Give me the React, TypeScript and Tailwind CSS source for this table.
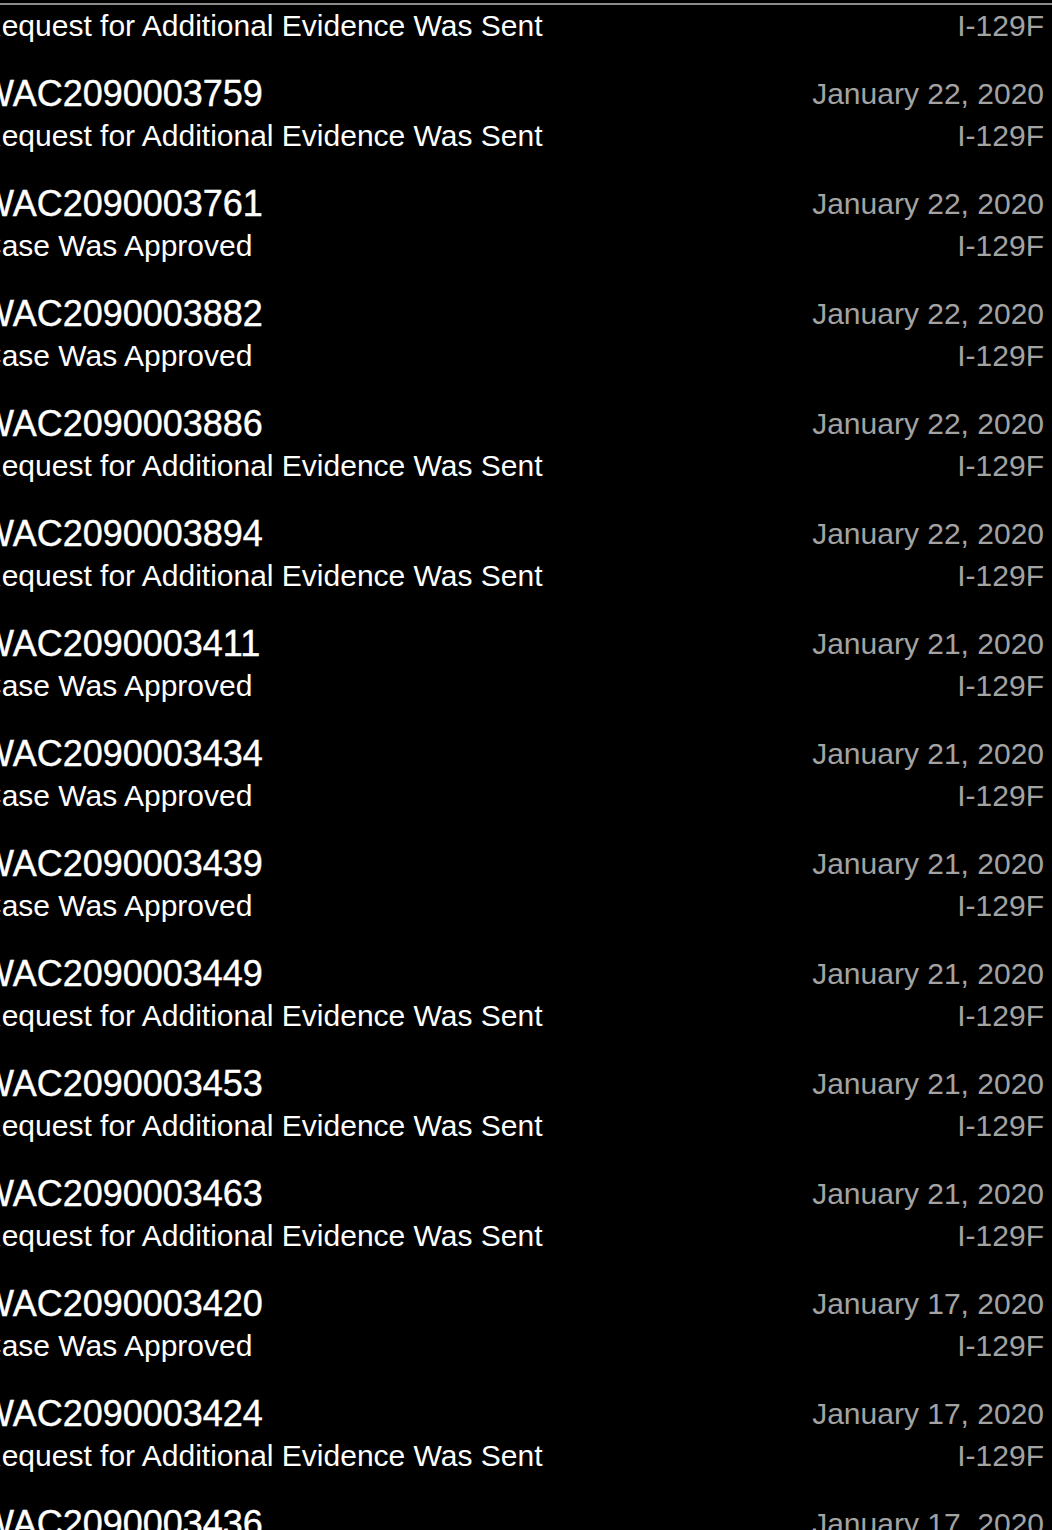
const REQ = 'Request for Additional Evidence Was Sent';
const OK = 'Case Was Approved';

const cases = [
  { id: 'WAC2090003751', date: 'January 22, 2020', status: REQ },
  { id: 'WAC2090003759', date: 'January 22, 2020', status: REQ },
  { id: 'WAC2090003761', date: 'January 22, 2020', status: OK },
  { id: 'WAC2090003882', date: 'January 22, 2020', status: OK },
  { id: 'WAC2090003886', date: 'January 22, 2020', status: REQ },
  { id: 'WAC2090003894', date: 'January 22, 2020', status: REQ },
  { id: 'WAC2090003411', date: 'January 21, 2020', status: OK },
  { id: 'WAC2090003434', date: 'January 21, 2020', status: OK },
  { id: 'WAC2090003439', date: 'January 21, 2020', status: OK },
  { id: 'WAC2090003449', date: 'January 21, 2020', status: REQ },
  { id: 'WAC2090003453', date: 'January 21, 2020', status: REQ },
  { id: 'WAC2090003463', date: 'January 21, 2020', status: REQ },
  { id: 'WAC2090003420', date: 'January 17, 2020', status: OK },
  { id: 'WAC2090003424', date: 'January 17, 2020', status: REQ },
  { id: 'WAC2090003436', date: 'January 17, 2020', status: OK },
  { id: 'WAC2090003441', date: 'January 17, 2020', status: OK },
];

export default function App() {
  return (
    <div className="relative w-[1052px] h-[1530px] overflow-hidden bg-black font-['Liberation_Sans',Arial,sans-serif] text-white">
      {/* list scrolled under the nav bar */}
      <div className="flex flex-col mt-[-50px]">
        {cases.map((c) => (
          <div key={c.id} className="flex justify-between ml-[-20px] pr-[8px] py-[13px]">
            <div className="flex flex-col">
              <span className="text-[36px] leading-[42px] [-webkit-text-stroke:0.4px_white]">{c.id}</span>
              <span className="text-[30px] leading-[42px]">{c.status}</span>
            </div>
            <div className="flex flex-col items-end text-[#a3a3a3]">
              <span className="text-[30px] leading-[42px]">{c.date}</span>
              <span className="text-[30px] leading-[42px]">I-129F</span>
            </div>
          </div>
        ))}
      </div>
      {/* nav bar bottom edge */}
      <div className="absolute left-0 right-0 top-0 h-[3px] bg-black" />
      <div className="absolute left-0 right-0 top-[3px] h-[2px] bg-[#8c8c8c]" />
    </div>
  );
}
